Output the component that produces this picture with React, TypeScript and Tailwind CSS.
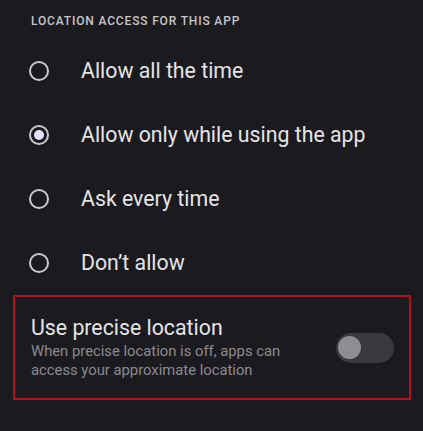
import { useState } from 'react';

const OPTIONS = ['Allow all the time', 'Allow only while using the app', 'Ask every time', 'Don\u2019t allow'];

function Radio({ checked }: { checked: boolean }) {
  return (
    <span className="w-5 h-5 rounded-full border-2 border-[#cacace] flex items-center justify-center flex-shrink-0">
      {checked && <span className="w-[10px] h-[10px] rounded-full bg-[#e4e2f7]" />}
    </span>
  );
}

export default function App() {
  const [selected, setSelected] = useState(1);
  const [precise, setPrecise] = useState(false);

  return (
    <div className="w-[423px] h-[431px] bg-[#1b1b1f] overflow-hidden font-['Roboto',sans-serif]">
      {/* Section header */}
      <div className="pt-[13px] pb-[10px] pl-[31px] h-[39px]">
        <span className="block h-4 leading-4 text-[12px] font-medium tracking-[0.07em] text-[#c6c6ca]">
          LOCATION ACCESS FOR THIS APP
        </span>
      </div>

      {/* Options */}
      <div className="flex flex-col">
        {OPTIONS.map((label, i) => (
          <button
            key={label}
            onClick={() => setSelected(i)}
            className="h-16 flex items-center gap-8 pl-[29px] text-left"
          >
            <Radio checked={selected === i} />
            <span className="text-[21.3px] text-[#e4e4e7] leading-none">{label}</span>
          </button>
        ))}
      </div>

      {/* Precise location */}
      <div className="ml-[13px] w-[398px] h-[105px] border-2 border-[#b3121c] flex items-center pl-4 pr-[15px]">
        <div className="flex-1 flex flex-col">
          <span className="text-[21.3px] leading-[26px] text-[#e4e4e7]">Use precise location</span>
          <span className="text-[14.8px] leading-[19px] text-[#8b8b90] mt-[1px]">
            When precise location is off, apps can
            <br />
            access your approximate location
          </span>
        </div>
        <button
          onClick={() => setPrecise(!precise)}
          className={`w-[58px] h-[30px] rounded-full flex items-center px-[2px] flex-shrink-0 ${precise ? 'bg-[#c3c0f0] justify-end' : 'bg-[#3a3a3e] justify-start'}`}
        >
          <span className={`w-[23px] h-[23px] rounded-full ${precise ? 'bg-[#2b2870]' : 'bg-[#8e8e92]'}`} />
        </button>
      </div>
    </div>
  );
}
